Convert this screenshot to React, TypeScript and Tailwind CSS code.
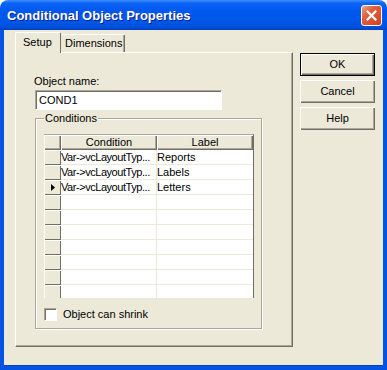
import React from 'react';

type Row = { condition: string; label: string; current?: boolean };

const rows: Row[] = [
  { condition: 'Var->vcLayoutTyp...', label: 'Reports' },
  { condition: 'Var->vcLayoutTyp...', label: 'Labels' },
  { condition: 'Var->vcLayoutTyp...', label: 'Letters', current: true },
  { condition: '', label: '' },
  { condition: '', label: '' },
  { condition: '', label: '' },
  { condition: '', label: '' },
  { condition: '', label: '' },
  { condition: '', label: '' },
  { condition: '', label: '' },
];

const raised = 'shadow-[inset_1px_1px_0_#fff,inset_-1px_-1px_0_#716f64,inset_-2px_-2px_0_#aca899]';

const DialogButton: React.FC<{ label: string; isDefault?: boolean }> = ({ label, isDefault }) => (
  <button
    className={`w-[75px] h-[23px] bg-[#ece9d8] text-[11px] text-black flex items-center justify-center ${
      isDefault
        ? 'border border-black shadow-[inset_1px_1px_0_#fff,inset_-1px_-1px_0_#716f64,inset_-2px_-2px_0_#aca899]'
        : raised
    }`}
  >
    {label}
  </button>
);

const ConditionsGrid: React.FC = () => (
  <div className="w-[210px] h-[164px] overflow-hidden flex flex-col border-t border-[#aca899] border-r border-r-[#716f64] bg-[#ece9d8]">
    {/* Header */}
    <div className="flex h-[15px] shrink-0">
      <div className={`w-[17px] h-full ${raised}`} />
      <div className={`w-[96px] h-full flex items-center justify-center ${raised}`}>Condition</div>
      <div className={`w-[96px] h-full flex items-center justify-center ${raised}`}>Label</div>
    </div>
    {/* Rows */}
    {rows.map((row, i) => (
      <div key={i} className="flex h-[15px] shrink-0">
        <div className="w-[17px] h-full flex items-center justify-center shadow-[inset_1px_1px_0_#fff,inset_-1px_-1px_0_#716f64]">
          {row.current && (
            <svg width="4" height="7" viewBox="0 0 4 7">
              <path d="M0 0 L4 3.5 L0 7 Z" fill="#000" />
            </svg>
          )}
        </div>
        <div className="w-[96px] h-full bg-white border-b border-r border-[#ece9d8] flex items-center whitespace-nowrap overflow-hidden tracking-[-0.45px]">
          {row.condition}
        </div>
        <div className="w-[96px] h-full bg-white border-b border-[#ece9d8] flex items-center whitespace-nowrap overflow-hidden">
          {row.label}
        </div>
      </div>
    ))}
  </div>
);

const App: React.FC = () => {
  return (
    <div
      className="w-[387px] h-[370px] bg-white text-black text-[11px] leading-[13px]"
      style={{ fontFamily: '"Liberation Sans", Arial, sans-serif' }}
    >
      <div className="w-full h-full flex flex-col rounded-t-[8px] overflow-hidden">
        {/* Title bar */}
        <div className="h-[30px] shrink-0 flex items-center justify-between pl-[7px] pr-[5px] bg-[linear-gradient(to_bottom,#3a8dff_0%,#0a63f4_12%,#0058ee_35%,#0057e8_70%,#0050dc_90%,#0043c4_100%)]">
          <span className="text-white font-bold text-[13px] [text-shadow:1px_1px_0_#0a1e8c]">
            Conditional Object Properties
          </span>
          <div className="w-[21px] h-[21px] rounded-[3px] border border-white bg-[linear-gradient(135deg,#eea48e_0%,#e2603f_35%,#d0401f_100%)] flex items-center justify-center">
            <svg width="11" height="11" viewBox="0 0 11 11">
              <path d="M1.5 1.5 L9.5 9.5 M9.5 1.5 L1.5 9.5" stroke="#fff" strokeWidth="2.2" strokeLinecap="square" />
            </svg>
          </div>
        </div>

        {/* Body */}
        <div className="flex-1 flex bg-[#ece9d8] border-x-4 border-b-4 border-[#0553e3] shadow-[inset_0_-1px_0_#0042c8]">
          {/* Left: tabs */}
          <div className="ml-[11px] pt-[2px] flex flex-col w-[278px]">
            <div className="flex items-end h-[21px] relative z-10">
              <div className="w-[46px] h-[21px] bg-[#ece9d8] rounded-t-[2px] border-t border-l border-white border-r border-r-[#716f64] flex items-center pl-[7px] pb-[1px]">
                Setup
              </div>
              <div className="w-[64px] h-[18px] mb-[1px] bg-[#ece9d8] rounded-t-[2px] border-t border-white border-r border-r-[#716f64] shadow-[inset_-1px_0_0_#aca899] flex items-center pl-[4px]">
                Dimensions
              </div>
            </div>
            <div className="-mt-[1px] h-[295px] border-t border-l border-white border-r border-b border-r-[#716f64] border-b-[#716f64] shadow-[inset_-1px_-1px_0_#aca899] pl-[19px] pt-[22px] flex flex-col">
              <span className="-ml-[1px]">Object name:</span>
              <div className="mt-[2px] w-[187px] h-[20px] bg-white border-t border-l border-[#aca899] border-b border-r border-b-white border-r-white shadow-[inset_1px_1px_0_#716f64] flex items-center pl-[3px]">
                COND1
              </div>
              {/* Conditions group */}
              <div className="relative mt-[8px] w-[227px] h-[211px] border border-[#aca899] shadow-[inset_1px_1px_0_#fff,1px_1px_0_#fff] pl-[8px] pt-[15px] flex flex-col">
                <span className="absolute left-[8px] -top-[7px] px-[1px] bg-[#ece9d8]">Conditions</span>
                <ConditionsGrid />
                <label className="mt-[10px] flex items-center gap-[6px]">
                  <span className="w-[13px] h-[13px] bg-white border-t border-l border-[#aca899] border-b border-r border-b-white border-r-white shadow-[inset_1px_1px_0_#716f64]" />
                  <span>Object can shrink</span>
                </label>
              </div>
            </div>
          </div>

          {/* Right: buttons */}
          <div className="ml-[7px] pt-[23px] flex flex-col gap-[4px]">
            <DialogButton label="OK" isDefault />
            <DialogButton label="Cancel" />
            <DialogButton label="Help" />
          </div>
        </div>
      </div>
    </div>
  );
};

export default App;
